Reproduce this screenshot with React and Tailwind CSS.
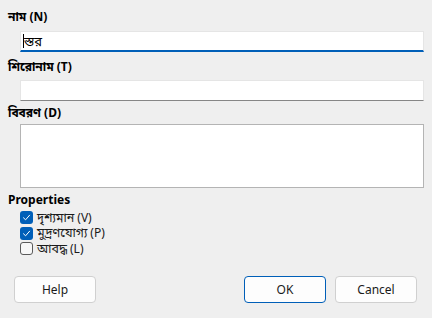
import React from 'react';

const Field = ({ value, focused }) => (
  <div
    className={`ml-[20px] mr-[8px] h-[21px] bg-white border border-[#e5e5e5] flex items-center pl-[2px] text-[13px] ${
      focused ? 'border-b-2 border-b-[#005fb8]' : 'border-b border-b-[#868686]'
    }`}
  >
    {focused && <span className="w-px h-[14px] bg-black" />}
    {value && <span className="leading-none">{value}</span>}
  </div>
);

const Check = ({ checked, label, hint }) => (
  <div className="flex items-center h-[15.5px] pl-[20px]">
    {checked ? (
      <span className="w-[13px] h-[13px] rounded-[3px] bg-[#005fb8] flex items-center justify-center">
        <svg width="9" height="9" viewBox="0 0 9 9" fill="none">
          <path d="M1.5 4.8 L3.6 6.8 L7.6 2.2" stroke="white" strokeWidth="1" strokeLinecap="round" strokeLinejoin="round" />
        </svg>
      </span>
    ) : (
      <span className="w-[13px] h-[13px] rounded-[3px] border border-[#5a5a5a] bg-[#f7f7f7]" />
    )}
    <span className="ml-[4px] text-[12.5px] leading-[14px] text-[#1a1a1a]">{label}</span>
    <span className="ml-[3px] text-[12px] leading-[14px] text-[#1a1a1a]">{hint}</span>
  </div>
);

const Button = ({ children, primary }) => (
  <button
    className={`w-[82px] h-[27px] rounded-[4px] bg-[#fdfdfd] text-[12px] text-[#1a1a1a] border ${
      primary ? 'border-[#005fb8]' : 'border-[#d0d0d0]'
    }`}
  >
    {children}
  </button>
);

export default function App() {
  return (
    <div className="w-[432px] h-[318px] bg-[#efefef] flex flex-col pt-[9px] font-['Noto_Sans','Noto_Sans_Bengali','Lohit_Bengali',sans-serif] text-black">
      <div className="pl-[8px] h-[16px] leading-[16px] text-[12px] font-bold">নাম (N)</div>
      <div className="mt-[6px]">
        <Field value="স্তর" focused />
      </div>
      <div className="mt-[7px] pl-[8px] h-[16px] leading-[16px] text-[12px] font-bold">শিরোনাম (T)</div>
      <div className="mt-[5px]">
        <Field />
      </div>
      <div className="mt-[4px] pl-[8px] h-[16px] leading-[16px] text-[12px] font-bold">বিবরণ (D)</div>
      <div className="mt-[3px] ml-[20px] mr-[8px] h-[64px] bg-white border border-[#b4b4b4]" />
      <div className="mt-[4px] pl-[8px] h-[16px] leading-[16px] text-[12px] font-bold">Properties</div>
      <div className="mt-[2px] flex flex-col">
        <Check checked label="দৃশ্যমান" hint="(V)" />
        <Check checked label="মুদ্রণযোগ্য" hint="(P)" />
        <Check label="আবদ্ধ" hint="(L)" />
      </div>
      <div className="mt-auto mb-[15px] px-[14px] flex justify-between">
        <Button>Help</Button>
        <div className="flex gap-[9px] pr-px">
          <Button primary>OK</Button>
          <Button>Cancel</Button>
        </div>
      </div>
    </div>
  );
}
